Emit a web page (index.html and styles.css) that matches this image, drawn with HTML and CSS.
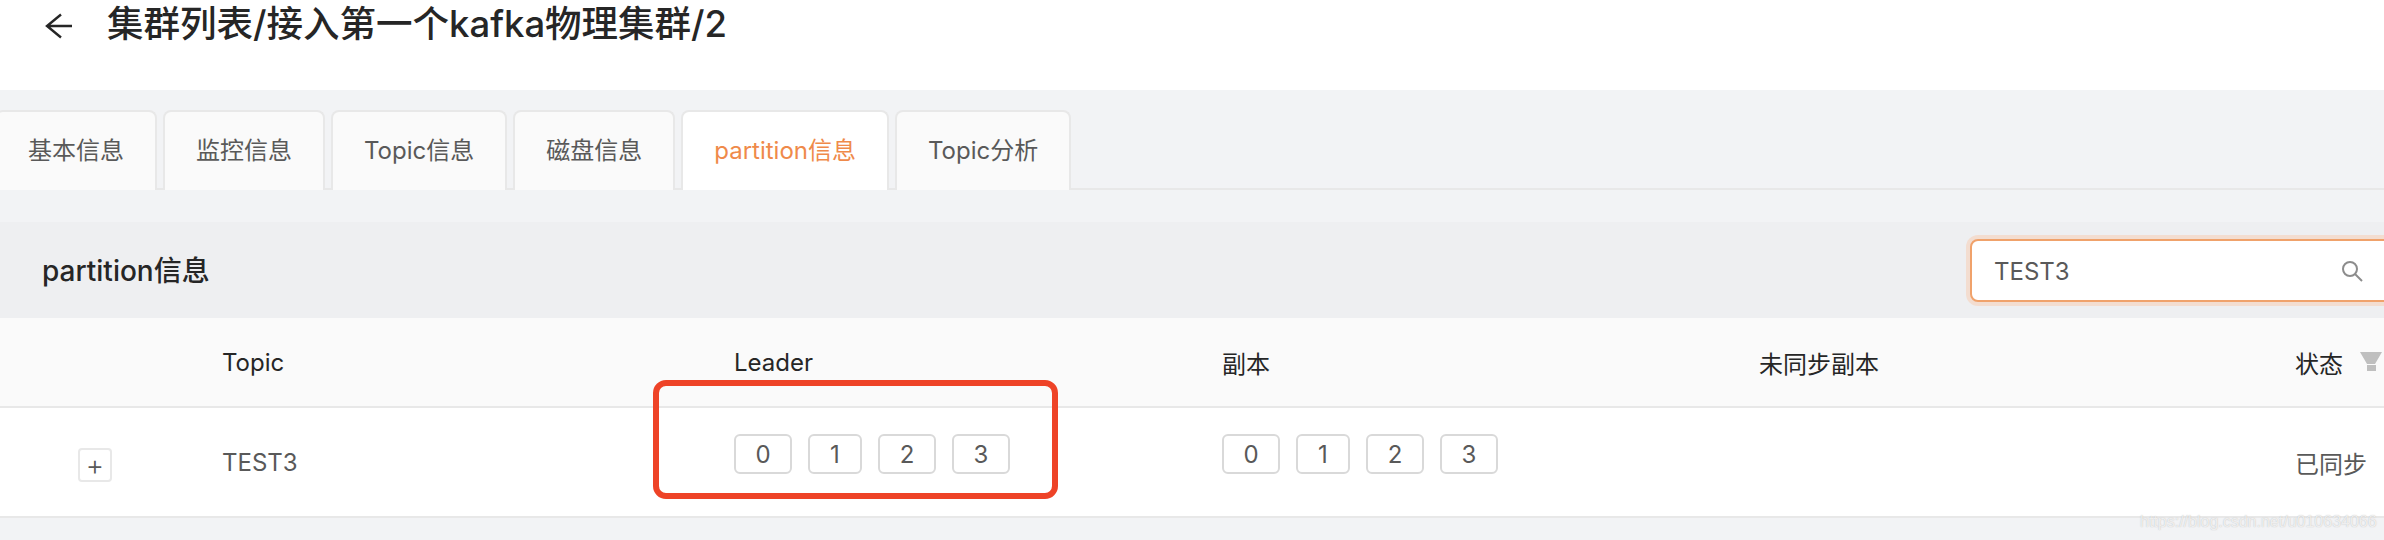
FILE: index.html
```html
<!DOCTYPE html>
<html lang="zh">
<head>
<meta charset="utf-8">
<title>partition信息</title>
<link rel="stylesheet" href="styles.css">
</head>
<body>
<header class="page-head">
  <svg class="back" viewBox="0 0 27 26" width="27" height="26"><path d="M27 13H2M16 1.5 2 13l14 11.5" fill="none" stroke="#262626" stroke-width="2.4"/></svg>
  <h1 class="page-title">集群列表/接入第一个kafka物理集群/2</h1>
</header>
<nav class="tabs">
  <a class="tab">基本信息</a>
  <a class="tab">监控信息</a>
  <a class="tab">Topic信息</a>
  <a class="tab">磁盘信息</a>
  <a class="tab active">partition信息</a>
  <a class="tab">Topic分析</a>
</nav>
<section class="panel">
  <div class="panel-head">
    <h2 class="panel-title">partition信息</h2>
    <div class="search">
      <span class="search-text">TEST3</span>
      <svg class="search-icon" viewBox="0 0 22 22" width="22" height="22"><circle cx="9" cy="9" r="7" fill="none" stroke="#8c8c8c" stroke-width="2"/><path d="M14 14l7 7" stroke="#8c8c8c" stroke-width="2" fill="none"/></svg>
    </div>
  </div>
  <div class="grid thead">
    <div></div>
    <div>Topic</div>
    <div>Leader</div>
    <div>副本</div>
    <div>未同步副本</div>
    <div class="status-head">状态<svg class="filter" viewBox="0 0 22 20" width="22" height="20"><path d="M0 0h22l-7 12H7zM7 13h9v6H7z" fill="#bfbfbf"/></svg></div>
  </div>
  <div class="grid trow">
    <div class="expand-cell"><span class="expand">+</span></div>
    <div>TEST3</div>
    <div class="tags"><span class="tag">0</span><span class="tag narrow">1</span><span class="tag">2</span><span class="tag">3</span></div>
    <div class="tags"><span class="tag">0</span><span class="tag narrow">1</span><span class="tag">2</span><span class="tag">3</span></div>
    <div></div>
    <div>已同步</div>
  </div>
</section>
<div class="highlight"></div>
<div class="watermark">https://blog.csdn.net/u010634066</div>
</body>
</html>
```
FILE: styles.css
```css
* { box-sizing: border-box; }
html, body { margin: 0; height: 540px; overflow: hidden; }
body {
  position: relative;
  background: #f2f3f5;
  font-family: Inter, "Noto Sans CJK SC", sans-serif;
  font-size: 24px;
  color: #595959;
}
.page-head {
  height: 90px;
  background: #fff;
  display: flex;
  align-items: flex-start;
  padding: 13px 0 0 45px;
}
.back { flex: none; }
.page-title {
  margin: -12px 0 0 35px;
  font-size: 36.5px;
  line-height: 46px;
  font-weight: 500;
  color: #262626;
}
.tabs {
  display: flex;
  gap: 6px;
  height: 80px;
  margin: 20px 0 0;
  border-bottom: 2px solid #e8e8e8;
}
.tab {
  height: 80px;
  margin-bottom: -2px;
  padding: 0 31px;
  display: flex;
  align-items: center;
  background: #fafafa;
  border: 2px solid #e8e8e8;
  border-bottom: 0;
  border-radius: 8px 8px 0 0;
  line-height: 36px;
}
.tab:first-child { margin-left: -5px; }
.tab.active { background: #fff; color: #ef8a4a; }
.panel { margin-top: 32px; }
.panel-head {
  height: 96px;
  background: #eeeff1;
  display: flex;
  align-items: center;
  justify-content: space-between;
  padding-left: 42px;
}
.panel-title {
  margin: 2px 0 0;
  font-size: 28px;
  line-height: 40px;
  font-weight: 500;
  color: #262626;
}
.search {
  flex: none;
  width: 430px;
  height: 63px;
  margin-right: -16px;
  padding: 2px 35px 0 22px;
  display: flex;
  align-items: center;
  justify-content: space-between;
  background: #fff;
  border: 2px solid #f0a26b;
  border-radius: 8px;
  box-shadow: 0 0 0 4px #f3ddd0;
}
.grid {
  display: grid;
  grid-template-columns: 222px 512px 488px 537px 536px 89px;
  align-items: center;
}
.thead {
  height: 90px;
  background: #fafafa;
  border-bottom: 2px solid #e8e8e8;
  color: #262626;
}
.status-head { display: flex; align-items: center; gap: 17px; white-space: nowrap; }
.filter { flex: none; }
.trow {
  height: 110px;
  background: #fff;
  border-bottom: 2px solid #e8e8e8;
}
.expand-cell { padding-left: 78px; }
.expand {
  display: flex;
  align-items: center;
  justify-content: center;
  width: 34px;
  height: 34px;
  border: 2px solid #e8e8e8;
  border-radius: 4px;
  margin-top: 6px;
  font-size: 28px;
  line-height: 28px;
  font-weight: 300;
}
.tags { display: flex; gap: 16px; margin-top: -16px; }
.tag {
  width: 58px;
  height: 40px;
  display: flex;
  align-items: center;
  justify-content: center;
  border: 2px solid #d9d9d9;
  border-radius: 6px;
}
.tag.narrow { width: 54px; }
.highlight {
  position: absolute;
  left: 653px;
  top: 380px;
  width: 405px;
  height: 119px;
  border: 6px solid #ee4327;
  border-radius: 13px;
}
.watermark {
  position: absolute;
  left: 2140px;
  top: 510px;
  font-family: "Liberation Sans", sans-serif;
  font-size: 16px;
  line-height: 24px;
  color: rgba(255,255,255,.75);
  text-shadow: 0 0 1px rgba(120,120,120,.5);
}
```
